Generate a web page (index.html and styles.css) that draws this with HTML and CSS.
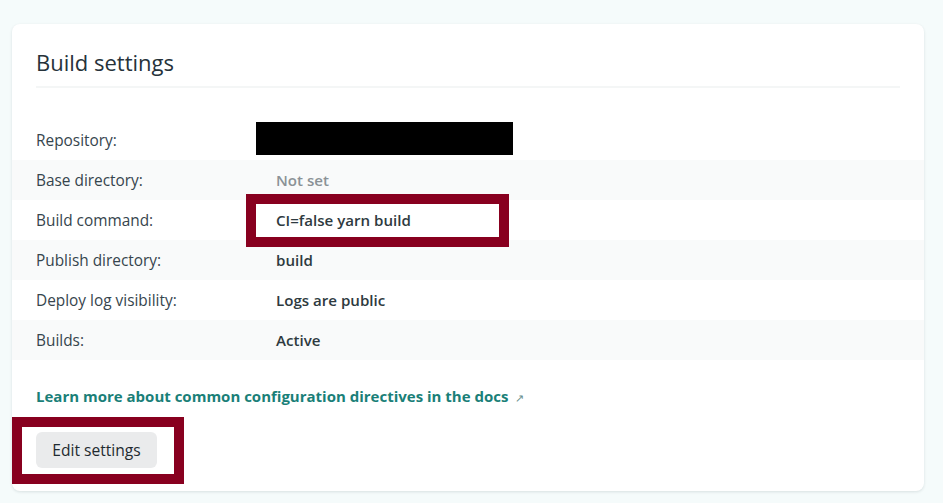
FILE: index.html
```html
<!DOCTYPE html>
<html>
<head>
<meta charset="utf-8">
<link rel="stylesheet" href="styles.css">
</head>
<body>
<div class="page">
  <section class="card">
    <header class="card-head">
      <h2 class="title">Build settings</h2>
    </header>
    <dl class="settings">
      <div class="row">
        <dt class="label">Repository:</dt>
        <dd class="value"><span class="redacted"></span></dd>
      </div>
      <div class="row alt">
        <dt class="label">Base directory:</dt>
        <dd class="value muted">Not set</dd>
      </div>
      <div class="row">
        <dt class="label">Build command:</dt>
        <dd class="value">CI=false yarn build<span class="mark mark-cmd"></span></dd>
      </div>
      <div class="row alt">
        <dt class="label">Publish directory:</dt>
        <dd class="value">build</dd>
      </div>
      <div class="row">
        <dt class="label">Deploy log visibility:</dt>
        <dd class="value">Logs are public</dd>
      </div>
      <div class="row alt">
        <dt class="label">Builds:</dt>
        <dd class="value">Active</dd>
      </div>
    </dl>
    <p class="docs"><a class="docs-link" href="#">Learn more about common configuration directives in the docs<span class="arrow">↗</span></a></p>
    <div class="actions">
      <button class="btn">Edit settings</button>
      <span class="mark mark-btn"></span>
    </div>
  </section>
</div>
</body>
</html>
```

FILE: styles.css
```css
html, body {
  margin: 0;
  padding: 0;
}
body {
  background: #f5fbfb;
  font-family: "Open Sans", "Noto Sans", sans-serif;
  color: #2e3b42;
}
.page {
  padding: 24px 19px 11px 12px;
}
.card {
  position: relative;
  background: #ffffff;
  border-radius: 8px;
  box-shadow: 0 1px 3px rgba(20, 40, 50, 0.12);
  padding: 0 0 23px 0;
}
.card-head {
  margin: 0 24px;
  padding: 26px 0 12px 0;
  border-bottom: 2px solid #f4f6f6;
}
.title {
  margin: 0;
  font-size: 22px;
  font-weight: 400;
  line-height: 24px;
  color: #26323a;
}
.settings {
  margin: 32px 0 0 0;
  padding: 0;
}
.row {
  display: flex;
  align-items: center;
  height: 40px;
  padding-left: 24px;
}
.row.alt {
  background: #f9fafa;
}
.label {
  width: 240px;
  margin: 0;
  font-size: 15.4px;
  color: #36454d;
}
.value {
  position: relative;
  margin: 0;
  font-size: 15.1px;
  font-weight: 600;
  color: #2e3a40;
}
.value.muted {
  color: #8b9296;
}
.redacted {
  display: block;
  position: relative;
  left: -20px;
  width: 257px;
  height: 33px;
  background: #000;
  top: -2px;
}
.mark {
  position: absolute;
  border: 10px solid #88001f;
  pointer-events: none;
}
.mark-cmd {
  left: -30px;
  top: -16px;
  width: 243px;
  height: 33px;
}
.docs {
  margin: 26px 24px 0 24px;
  font-size: 15px;
  font-weight: 700;
  line-height: 20px;
}
.docs-link {
  color: #1a7f78;
  text-decoration: none;
}
.arrow {
  margin-left: 7px;
  font-size: 11px;
  font-weight: 400;
  color: #6a8f8c;
}
.actions {
  position: relative;
  margin: 24px 24px 0 24px;
  height: 36px;
}
.btn {
  display: block;
  font-family: inherit;
  font-size: 15.6px;
  font-weight: 400;
  color: #1f2a30;
  background: #eaebec;
  border: none;
  border-radius: 6px;
  width: 121px;
  height: 36px;
  padding: 0;
}
.mark-btn {
  left: -24px;
  top: -15px;
  width: 152px;
  height: 47px;
}
```
